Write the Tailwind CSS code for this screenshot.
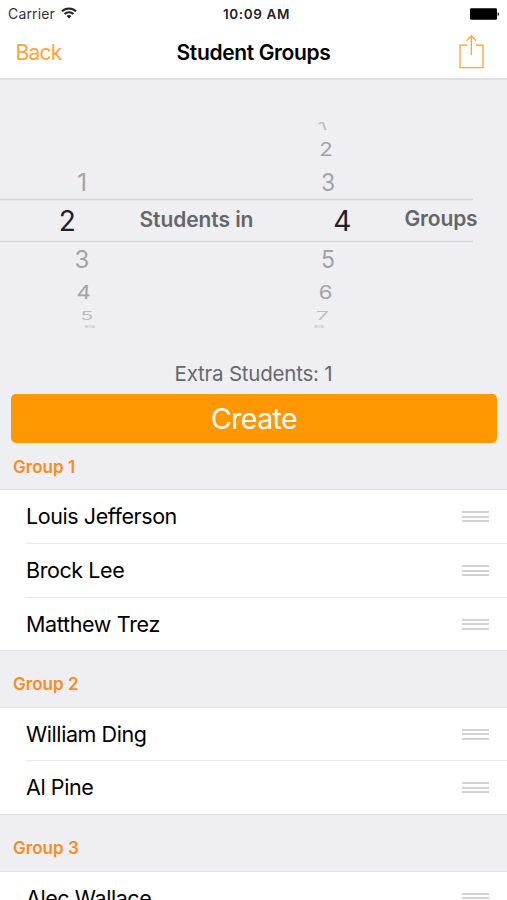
<!DOCTYPE html>
<html lang="en">
<head>
<meta charset="utf-8">
<title>Student Groups</title>
<script src="https://cdn.jsdelivr.net/npm/@tailwindcss/browser@4"></script>
</head>
<body class="w-[507px] h-[900px] overflow-hidden bg-[#efeef3] font-['Inter','Liberation_Sans',sans-serif] text-black">
<main class="flex flex-col h-[900px] overflow-hidden">
  <header class="h-20 shrink-0 bg-white border-b-2 border-[#e0e0e2]">
    <div class="h-7 grid grid-cols-3 items-center pl-2 pr-[7px]">
      <div class="flex items-center gap-[6px] text-[#333]">
        <span class="text-[14px] leading-7 tracking-[0.15px]">Carrier</span>
        <svg class="w-4 h-3 -mt-0.5" viewBox="0 0 16 12" fill="none" stroke="#222" stroke-width="2"><path d="M1 4.3a10 10 0 0 1 14 0M3.5 7a6.4 6.4 0 0 1 9 0"/><path d="M8 11.5 5.6 9.1a3.4 3.4 0 0 1 4.8 0Z" fill="#222" stroke="none"/></svg>
      </div>
      <span class="pl-[5px] text-center text-[13.5px] font-semibold leading-7 text-[#222] tracking-[0.6px] whitespace-nowrap">10:09 AM</span>
      <svg class="w-[31px] h-3 justify-self-end -mt-px" viewBox="0 0 31 12"><rect x="1" y="0.3" width="27" height="11.4" rx="1.2" fill="#000"/><path d="M28.6 4.2c2 .4 2 3.4 0 3.8Z" fill="#222"/></svg>
    </div>
    <nav class="h-[50px] grid grid-cols-[80px_1fr_80px] items-center">
      <span class="pl-[15.5px] text-[21px] tracking-[-0.8px] text-[#ffa436]">Back</span>
      <h1 class="text-center text-[21px] font-semibold tracking-[-0.36px]">Student Groups</h1>
      <svg class="w-[26px] h-[36px] justify-self-end mr-[23px] -mt-[5px]" viewBox="0 0 26 36" fill="none" stroke="#ffa93c" stroke-width="1.4"><path d="M9.2 12.2H2v22.4h23V12.2h-7.2M13.3 22V2.5M8.6 7.7l4.7-4.9L18 7.7"/></svg>
    </nav>
  </header>

  <section class="h-[275px] shrink-0">
    <svg class="w-[507px] h-[275px]" viewBox="0 80 507 275">
      <path d="M0 199.5H473M0 241.5H473" stroke="#d6d6da" stroke-width="1.4"/>
      <g text-anchor="middle" font-size="24" fill="#a2a2a7">
        <text transform="translate(82 191)">1</text>
        <text transform="translate(82 267.5)">3</text>
        <text transform="translate(83.5 299) skewX(-3) scale(.92 .8)">4</text>
        <text transform="translate(87 320) scale(.88 .5)" fill="#bcbcc1">5</text>
        <text transform="translate(90 328) scale(.84 .13)" fill="#c4c4c8">6</text>
        <text transform="translate(324 130) skewX(20) scale(.84 .46)" fill="#bcbcc1">1</text>
        <text transform="translate(326 156) scale(.92 .79)">2</text>
        <text transform="translate(328 191) scale(.96 1)">3</text>
        <text transform="translate(328 268) scale(.96 1)">5</text>
        <text transform="translate(325.5 299) scale(.92 .8)">6</text>
        <text transform="translate(322.5 320) scale(.95 .5)" fill="#bcbcc1">7</text>
        <text transform="translate(319 328) scale(.84 .13)" fill="#c4c4c8">8</text>
      </g>
      <g text-anchor="middle" font-size="28" fill="#202024">
        <text x="67.3" y="231">2</text>
        <text x="342.3" y="231">4</text>
      </g>
      <g font-size="21" font-weight="600" fill="#666668">
        <text x="139.5" y="227" letter-spacing="-.08">Students in</text>
        <text x="404.5" y="225.5" letter-spacing="-.15">Groups</text>
      </g>
    </svg>
  </section>

  <p class="h-10 shrink-0 pt-[5px] text-center text-[20.5px] leading-[28px] tracking-[-0.22px] text-[#68686b]">Extra Students: 1</p>
  <button class="h-[49px] shrink-0 ml-[11px] mr-[10px] -translate-y-px rounded-[5px] bg-[#ff9700] text-white text-[28.5px] leading-[50px] tracking-[-0.6px]">Create</button>

  <h2 class="h-[46px] shrink-0 pl-[13px] pt-[11px] border-b border-[#e3e3e6] text-[17px] leading-6 font-semibold tracking-[0.03px] text-[#fb8c1e]">Group 1</h2>
  <ul class="shrink-0 bg-white text-[21.5px] tracking-[-0.42px]">
    <li class="h-[54px] pl-[26px]"><div class="h-full flex items-center justify-between pr-[18px] border-b border-[#e9e9eb]"><span>Louis Jefferson</span><i class="w-[27px] h-[11px] flex flex-col justify-between"><b class="h-[2px] bg-[#d2d2d4]"></b><b class="h-[2px] bg-[#d2d2d4]"></b><b class="h-[2px] bg-[#d2d2d4]"></b></i></div></li>
    <li class="h-[54px] pl-[26px]"><div class="h-full flex items-center justify-between pr-[18px] border-b border-[#e9e9eb]"><span>Brock Lee</span><i class="w-[27px] h-[11px] flex flex-col justify-between"><b class="h-[2px] bg-[#d2d2d4]"></b><b class="h-[2px] bg-[#d2d2d4]"></b><b class="h-[2px] bg-[#d2d2d4]"></b></i></div></li>
    <li class="h-[53px] pl-[26px] pr-[18px] flex items-center justify-between border-b border-[#e3e3e6]"><span class="tracking-[-0.34px]">Matthew Trez</span><i class="w-[27px] h-[11px] flex flex-col justify-between"><b class="h-[2px] bg-[#d2d2d4]"></b><b class="h-[2px] bg-[#d2d2d4]"></b><b class="h-[2px] bg-[#d2d2d4]"></b></i></li>
  </ul>
  <h2 class="h-[57px] shrink-0 pl-[13px] pt-[21px] border-b border-[#e3e3e6] text-[17px] leading-6 font-semibold tracking-[0.03px] text-[#fb8c1e]">Group 2</h2>
  <ul class="shrink-0 bg-white text-[21.5px] tracking-[-0.42px]">
    <li class="h-[53px] pl-[26px]"><div class="h-full flex items-center justify-between pr-[18px] border-b border-[#e9e9eb]"><span>William Ding</span><i class="w-[27px] h-[11px] flex flex-col justify-between"><b class="h-[2px] bg-[#d2d2d4]"></b><b class="h-[2px] bg-[#d2d2d4]"></b><b class="h-[2px] bg-[#d2d2d4]"></b></i></div></li>
    <li class="h-[54px] pl-[26px] pr-[18px] flex items-center justify-between border-b border-[#e3e3e6]"><span>Al Pine</span><i class="w-[27px] h-[11px] flex flex-col justify-between"><b class="h-[2px] bg-[#d2d2d4]"></b><b class="h-[2px] bg-[#d2d2d4]"></b><b class="h-[2px] bg-[#d2d2d4]"></b></i></li>
  </ul>
  <h2 class="h-[57px] shrink-0 pl-[13px] pt-[21px] border-b border-[#e3e3e6] text-[17px] leading-6 font-semibold tracking-[0.03px] text-[#fb8c1e]">Group 3</h2>
  <ul class="shrink-0 bg-white text-[21.5px] tracking-[-0.42px]">
    <li class="h-[52px] pl-[26px] pr-[18px] flex items-center justify-between"><span>Alec Wallace</span><i class="w-[27px] h-[11px] flex flex-col justify-between"><b class="h-[2px] bg-[#d2d2d4]"></b><b class="h-[2px] bg-[#d2d2d4]"></b><b class="h-[2px] bg-[#d2d2d4]"></b></i></li>
  </ul>
</main>
</body>
</html>
